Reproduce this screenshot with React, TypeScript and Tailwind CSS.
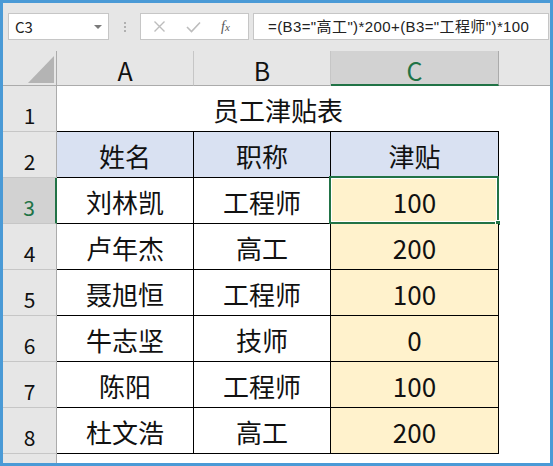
import React from "react";

type Row = { n: number; a: string; b: string; c: string; head?: boolean };

const rows: Row[] = [
  { n: 2, a: "姓名", b: "职称", c: "津贴", head: true },
  { n: 3, a: "刘林凯", b: "工程师", c: "100" },
  { n: 4, a: "卢年杰", b: "高工", c: "200" },
  { n: 5, a: "聂旭恒", b: "工程师", c: "100" },
  { n: 6, a: "牛志坚", b: "技师", c: "0" },
  { n: 7, a: "陈阳", b: "工程师", c: "100" },
  { n: 8, a: "杜文浩", b: "高工", c: "200" },
];

function RowHeader({ n, active }: { n: number | null; active?: boolean }) {
  return (
    <div
      className={
        active
          ? "w-[54px] shrink-0 h-full flex items-end justify-center pb-[5px] bg-[#d2d2d2] border-r-2 border-r-[#217346] border-b border-b-[#c6c6c6] text-[21px] leading-none text-[#217346]"
          : "w-[54px] shrink-0 h-full flex items-end justify-center pb-[5px] bg-[#e6e6e6] border-r border-r-[#ababab] border-b border-b-[#c6c6c6] text-[21px] leading-none text-[#111]"
      }
    >
      {n}
    </div>
  );
}

export default function App() {
  return (
    <div className="w-[553px] h-[466px] border-[3px] border-[#4a9ad6] bg-[#e6e6e6] flex flex-col overflow-hidden font-['Noto_Sans_CJK_SC','Noto_Sans',sans-serif] text-[#111]">
      {/* formula bar */}
      <div className="h-[48px] shrink-0 flex items-start pt-[10px] pl-[5px] pr-[1px]">
        <div className="w-[101px] h-[27px] bg-white border border-[#c6c6c6] flex items-center justify-between pl-[6px] pr-[6px]">
          <span className="text-[15px] leading-none text-[#222]">C3</span>
          <span className="w-0 h-0 border-l-[4px] border-r-[4px] border-t-[4px] border-l-transparent border-r-transparent border-t-[#7a7a7a]" />
        </div>
        <div className="w-[31px] h-[27px] flex flex-col items-center justify-center gap-[2px]">
          <span className="w-[2px] h-[2px] bg-[#b0b0b0]" />
          <span className="w-[2px] h-[2px] bg-[#b0b0b0]" />
          <span className="w-[2px] h-[2px] bg-[#b0b0b0]" />
        </div>
        <div className="w-[109px] h-[27px] bg-white border border-[#c6c6c6] flex items-center pl-[12px] gap-[20px]">
          <svg width="13" height="13" viewBox="0 0 13 13">
            <path d="M1.5 1.5 L11.5 11.5 M11.5 1.5 L1.5 11.5" stroke="#bdbdbd" strokeWidth="1.4" fill="none" />
          </svg>
          <svg width="15" height="12" viewBox="0 0 15 12">
            <path d="M1 6 L5.5 10.5 L14 1.5" stroke="#bdbdbd" strokeWidth="1.6" fill="none" />
          </svg>
          <span className="font-['Liberation_Serif',serif] italic text-[14px] leading-none text-[#555]">
            f<span className="text-[11px]">x</span>
          </span>
        </div>
        <div className="ml-[4px] flex-1 h-[27px] bg-white border border-[#c6c6c6] flex items-center pl-[14px] font-['Liberation_Sans','Noto_Sans_CJK_SC',sans-serif] text-[15px] tracking-[0.4px] leading-none text-[#222] whitespace-nowrap">
          =(B3="高工")*200+(B3="工程师")*100
        </div>
      </div>

      {/* column headers */}
      <div className="h-[35px] shrink-0 flex">
        <div className="w-[54px] shrink-0 border-r border-b border-[#ababab] flex items-end justify-end pr-[2px] pb-[2px]">
          <svg width="26" height="27" viewBox="0 0 26 27">
            <polygon points="26,0 26,27 0,27" fill="#b4b4b4" />
          </svg>
        </div>
        <div className="w-[137px] shrink-0 border-r border-r-[#c6c6c6] border-b border-b-[#ababab] flex items-center justify-center pt-[4px] text-[25px] leading-none">
          A
        </div>
        <div className="w-[137px] shrink-0 border-r border-r-[#c6c6c6] border-b border-b-[#ababab] flex items-center justify-center pt-[4px] text-[25px] leading-none">
          B
        </div>
        <div className="w-[168px] shrink-0 bg-[#d2d2d2] border-r border-r-[#ababab] border-b-2 border-b-[#217346] flex items-center justify-center pt-[5px] text-[25px] leading-none text-[#217346]">
          C
        </div>
        <div className="flex-1 border-b border-[#ababab]" />
      </div>

      {/* row 1 */}
      <div className="h-[46px] shrink-0 flex">
        <RowHeader n={1} />
        <div className="w-[442px] shrink-0 bg-white border-b border-black flex items-center justify-center pt-[2px] text-[26px] leading-none">
          员工津贴表
        </div>
        <div className="flex-1 bg-white" />
      </div>

      {rows.map((r) => {
        const bg = r.head ? "bg-[#d9e1f2]" : "bg-white";
        const cbg = r.head ? "bg-[#d9e1f2]" : "bg-[#fff2cc]";
        return (
          <div key={r.n} className="h-[46px] shrink-0 flex">
            <RowHeader n={r.n} active={r.n === 3} />
            <div className={`w-[137px] shrink-0 ${bg} border-r border-b border-black flex items-center justify-center pt-[2px] text-[26px] leading-none`}>
              {r.a}
            </div>
            <div className={`w-[137px] shrink-0 ${bg} border-r border-b border-black flex items-center justify-center pt-[2px] text-[26px] leading-none`}>
              {r.b}
            </div>
            <div className={`relative w-[168px] shrink-0 ${cbg} border-r border-b border-black flex items-center justify-center pt-[2px] text-[26px] leading-none`}>
              {r.c}
              {r.n === 3 && (
                <div className="absolute -left-[2px] -top-[2px] -right-[1px] -bottom-[1px] border-2 border-[#217346] shadow-[inset_0_0_0_1px_white]">
                  <div className="absolute -right-[4px] -bottom-[4px] w-[6px] h-[6px] bg-[#217346] border border-white" />
                </div>
              )}
            </div>
            <div className="flex-1 bg-white" />
          </div>
        );
      })}

      {/* partial row */}
      <div className="flex-1 flex">
        <div className="w-[54px] shrink-0 bg-[#e6e6e6] border-r border-[#ababab]" />
        <div className="flex-1 bg-white" />
      </div>
    </div>
  );
}
